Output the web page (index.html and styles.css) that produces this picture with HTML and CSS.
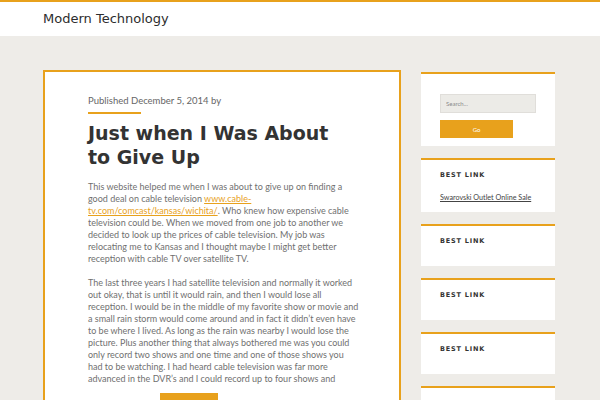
FILE: index.html
```html
<!DOCTYPE html>
<html lang="en">
<head>
    <meta charset="UTF-8">
    <title>Modern Technology</title>
    <link rel="stylesheet" href="styles.css">
</head>
<body>
    <header class="site-header">
        <div class="container">
            <a class="site-title" href="#">Modern Technology</a>
        </div>
    </header>

    <div class="container site-content">
        <main class="post-card">
            <div class="post-meta">Published December 5, 2014 by</div>
            <h1 class="post-title">Just when I Was About to Give Up</h1>
            <div class="post-excerpt">
                <p>This website helped me when I was about to give up on finding a good deal on cable television <a href="#">www.cable-tv.com/comcast/kansas/wichita/</a>. Who knew how expensive cable television could be. When we moved from one job to another we decided to look up the prices of cable television. My job was relocating me to Kansas and I thought maybe I might get better reception with cable TV over satellite TV.</p>
                <p>The last three years I had satellite television and normally it worked out okay, that is until it would rain, and then I would lose all reception. I would be in the middle of my favorite show or movie and a small rain storm would come around and in fact it didn’t even have to be where I lived. As long as the rain was nearby I would lose the picture. Plus another thing that always bothered me was you could only record two shows and one time and one of those shows you had to be watching. I had heard cable television was far more advanced in the DVR’s and I could record up to four shows and</p>
                <p class="more-line">watch all 80! <a class="read-more" href="#">Read More</a></p>
            </div>
        </main>

        <aside class="sidebar">
            <section class="widget">
                <form class="search-form">
                    <input type="text" placeholder="Search...">
                    <button type="button">Go</button>
                </form>
            </section>
            <section class="widget">
                <h3 class="widget-title">Best Link</h3>
                <ul>
                    <li><a href="#">Swarovski Outlet Online Sale</a></li>
                </ul>
            </section>
            <section class="widget">
                <h3 class="widget-title">Best Link</h3>
            </section>
            <section class="widget">
                <h3 class="widget-title">Best Link</h3>
            </section>
            <section class="widget">
                <h3 class="widget-title">Best Link</h3>
            </section>
            <section class="widget">
                <h3 class="widget-title">Best Link</h3>
            </section>
        </aside>
    </div>
</body>
</html>
```

FILE: styles.css
```css
:root {
    --accent: #e8a11c;
    --page-bg: #eeece8;
    --title-color: #333333;
    --text-color: #707070;
}

* {
    margin: 0;
    padding: 0;
    box-sizing: border-box;
}

body {
    background: var(--page-bg);
    font-family: 'Lato', 'Open Sans', sans-serif;
    color: var(--text-color);
}

.container {
    width: 514px;
    padding-right: 2px;
    margin: 0 auto;
}

.site-header {
    background: #fff;
    border-top: 2px solid var(--accent);
    height: 36px;
}

.site-header .container {
    padding-top: 5px;
}

.site-title {
    font-family: 'DejaVu Sans', sans-serif;
    font-size: 13px;
    line-height: 16px;
    color: #2d2d2d;
    text-decoration: none;
}

.site-content {
    display: flex;
    align-items: flex-start;
    gap: 20px;
    margin-top: 34px;
}

.post-card {
    width: 358px;
    flex-shrink: 0;
    background: #fff;
    border: 2px solid var(--accent);
    padding: 23px 40px 40px 43px;
}

.post-meta {
    font-size: 9.5px;
    line-height: 12px;
    color: #666;
}

.post-meta::after {
    content: '';
    display: block;
    width: 53px;
    height: 2px;
    background: var(--accent);
    margin-top: 5px;
}

.post-title {
    font-family: 'DejaVu Sans', sans-serif;
    font-size: 19px;
    line-height: 24px;
    font-weight: bold;
    color: var(--title-color);
    margin: 7px 0 12px;
    padding-right: 12px;
}

.post-excerpt p {
    font-size: 9px;
    line-height: 12px;
    margin-bottom: 12px;
}

.post-excerpt a {
    color: var(--accent);
}

.post-excerpt .more-line {
    margin-top: -4px;
}

.read-more {
    display: inline-block;
    margin-left: 20px;
    padding: 5px 7px;
    background: var(--accent);
    color: #fff !important;
    text-decoration: none;
    line-height: 12px;
}

.sidebar {
    width: 134px;
    margin-top: 2px;
    display: flex;
    flex-direction: column;
    gap: 12px;
}

.widget {
    background: #fff;
    border-top: 2px solid var(--accent);
    padding: 10px 19px 8px;
}

.widget-title {
    font-family: 'DejaVu Sans', sans-serif;
    font-size: 6.5px;
    line-height: 10px;
    font-weight: bold;
    letter-spacing: 0.8px;
    text-transform: uppercase;
    color: #333;
    margin-bottom: 12px;
}

.widget ul {
    list-style: none;
}

.widget li {
    font-size: 7.2px;
    line-height: 12px;
}

.widget li a {
    color: #444;
}

.search-form {
    padding-top: 10px;
}

.search-form input {
    display: block;
    width: 96px;
    height: 19px;
    padding: 0 5px;
    background: #ecebe7;
    border: 1px solid #e0deda;
    font-family: 'Lato', sans-serif;
    font-size: 6px;
    outline: none;
}

.search-form input::placeholder {
    color: #8a8a8a;
}

.search-form button {
    display: block;
    width: 73px;
    height: 18px;
    margin-top: 7px;
    background: var(--accent);
    border: none;
    color: #fff;
    font-family: 'Lato', sans-serif;
    font-size: 6px;
}
```
